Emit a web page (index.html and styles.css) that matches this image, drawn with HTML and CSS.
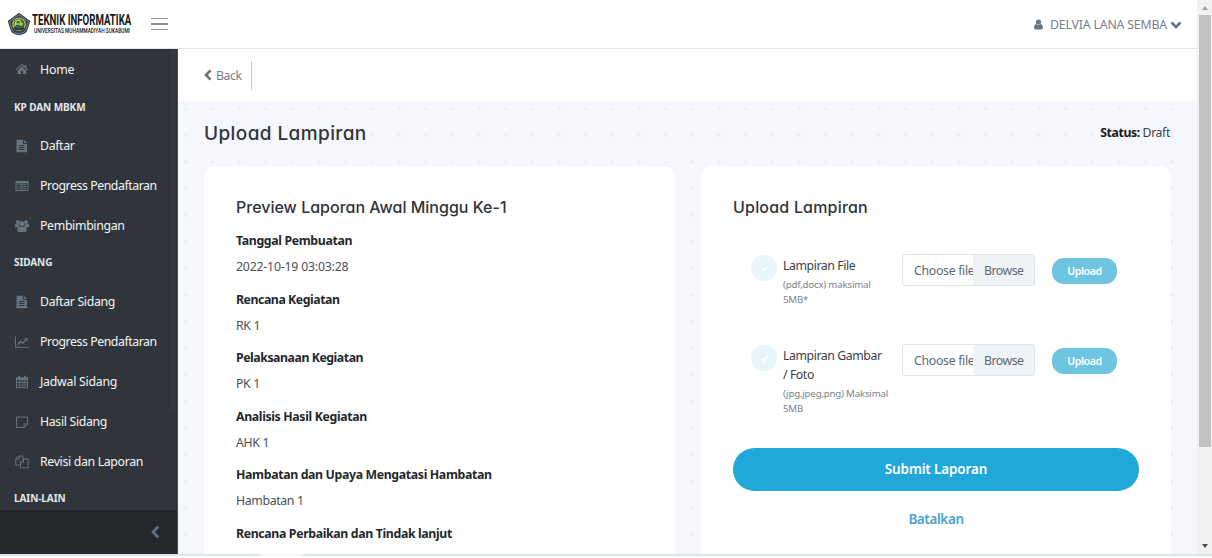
FILE: index.html
```html
<!DOCTYPE html>
<html lang="id">
<head>
<meta charset="utf-8">
<title>Upload Lampiran</title>
<link rel="stylesheet" href="styles.css">
</head>
<body>
<div class="screen">
  <div class="app">
    <header class="topbar">
      <div class="brand">
        <svg class="crest" viewBox="0 0 24 24"><path d="M12 .8 23.3 9 20.6 17.500Q19.500 22.300 12 23.300 4.500 22.300 3.400 17.500L.7 9z" fill="#34414f"/><path d="M12 2.500 21.500 9.500 19 17.600Q17.500 21 12 22 6.500 21 5 17.600L2.500 9.500z" fill="none" stroke="#8793a0" stroke-width=".8"/><circle cx="12" cy="12.200" r="6.800" fill="#c9b944"/><circle cx="12" cy="12.200" r="5.600" fill="#2e694f"/><path d="M8 14c0-4 2-6 4-6s2 4 2 6M8 12h8" fill="none" stroke="#c9cf50" stroke-width="1.500"/><path d="M7 16q5 3 10 0" fill="none" stroke="#203040" stroke-width="1.500"/></svg>
        <div class="wordmark"><span class="word-main">TEKNIK INFORMATIKA</span><span class="word-sub">UNIVERSITAS MUHAMMADIYAH SUKABUMI</span></div>
      </div>
      <div class="burger"><i></i><i></i><i></i></div>
      <div class="user">
        <svg class="person" viewBox="0 0 10 12"><circle cx="5" cy="3.300" r="2.900"/><path d="M2.200 5.500Q0 6.200 0 9.300 0 11.500 1.800 11.500H8.200Q10 11.500 10 9.300 10 6.200 7.800 5.500 5 8 2.200 5.500z"/></svg>
        <span class="user-name">DELVIA LANA SEMBA</span>
        <svg class="caret" viewBox="0 0 12 8"><path d="M1.500 1.500 6 6 10.500 1.500"/></svg>
      </div>
    </header>
    <div class="body">
      <aside class="sidebar">
        <nav class="menu">
          <a class="item"><svg class="ico" viewBox="0 0 14 14"><path d="M7 2 .8 7.300l.7.800L7 3.500l5.500 4.600.7-.8-2-1.700V2.800H9.700v1.500zM7 4.600 2.700 8.200V12H6V9h2v3h3.300V8.200z"/></svg><span class="w-home">Home</span></a>
          <div class="group"><span>KP DAN MBKM</span></div>
          <a class="item"><svg class="ico" viewBox="0 0 14 14"><path fill-rule="evenodd" d="M1.500.8H8V5h4v8.200H1.500zM9 .8 12 4H9zM4 6v1h5.500V6zm0 2v1h5.500V8zm0 2v1h5.500v-1z"/></svg><span>Daftar</span></a>
          <a class="item"><svg class="ico" viewBox="0 0 14 14"><path fill-rule="evenodd" d="M.5 2h13v10H.5zM1.500 4.500v6.500h11V4.500zM2.500 5.300h1v1h-1zm2 0h7v1h-7zm-2 2h1v1h-1zm2 0h7v1h-7zm-2 2h1v1h-1zm2 0h7v1h-7z"/></svg><span class="w-prog">Progress Pendaftaran</span></a>
          <a class="item"><svg class="ico" viewBox="0 0 14 14"><circle cx="2.900" cy="3" r="1.900"/><circle cx="11.100" cy="3" r="1.900"/><circle cx="7" cy="4.700" r="2.700"/><path d="M0 7.700V6.200Q0 4.800 1.300 4.600L3.700 5.400Q3.800 6.800 4.500 7.200L3 8.200H.8Q0 8.200 0 7.700zM14 7.700V6.200Q14 4.800 12.700 4.600L10.300 5.400Q10.200 6.800 9.500 7.200L11 8.200h2.200q.8 0 .8-.5zM4.300 7.200Q2.300 7.700 2.300 11.200q0 1.900 1.700 1.900h6q1.700 0 1.700-1.900 0-3.500-2-4-2.700 1.800-5.400 0z"/></svg><span>Pembimbingan</span></a>
          <div class="group g-up"><span>SIDANG</span></div>
          <a class="item"><svg class="ico" viewBox="0 0 14 14"><path fill-rule="evenodd" d="M1.500.8H8V5h4v8.200H1.500zM9 .8 12 4H9zM4 6v1h5.500V6zm0 2v1h5.500V8zm0 2v1h5.500v-1z"/></svg><span>Daftar Sidang</span></a>
          <a class="item"><svg class="ico line" viewBox="0 0 14 14"><path d="M.5 1.500v10.800H14"/><path d="M2.800 9.500 5.700 6.300l2 2L11.800 4" stroke-width="1.500"/><path d="M9.300 3h3.300v3.300z" class="solid"/></svg><span class="w-prog">Progress Pendaftaran</span></a>
          <a class="item"><svg class="ico" viewBox="0 0 14 14"><path fill-rule="evenodd" d="M1 2.300h2V.8h2v1.500h4V.8h2v1.500h2v11H1zM2 5.300v1.800h2V5.300zm2.800 0v1.800h2V5.300zm2.800 0v1.800h2V5.300zm2.800 0v1.800H12V5.300zM2 7.900v1.800h2V7.900zm2.800 0v1.800h2V7.900zm2.800 0v1.800h2V7.900zm2.800 0v1.800H12V7.900zM2 10.500v1.800h2v-1.800zm2.800 0v1.800h2v-1.800zm2.800 0v1.800h2v-1.800zm2.800 0v1.800H12v-1.800z"/></svg><span class="w-jad">Jadwal Sidang</span></a>
          <a class="item"><svg class="ico line" viewBox="0 0 14 14"><path d="M1.500 2h11v7.500L9.500 12.500h-8zM12.500 9H9v3.500"/></svg><span>Hasil Sidang</span></a>
          <a class="item"><svg class="ico line" viewBox="0 0 14 14"><path d="M5 10H.8V4L4 1h4v3M4 1v3H.8M5.500 7l3-3h4.700v8.800H5.500zM8.500 4v3.200h-3"/></svg><span>Revisi dan Laporan</span></a>
          <div class="group g-up"><span>LAIN-LAIN</span></div>
        </nav>
        <div class="thumb"></div>
        <div class="minimizer"><svg viewBox="0 0 9 14"><path d="M7.300 1.500 2 7l5.300 5.500"/></svg></div>
      </aside>
      <main class="main">
        <div class="crumb"><a class="back"><svg viewBox="0 0 8 12"><path d="M6.500 1.300 2 6l4.500 4.700"/></svg><span>Back</span></a></div>
        <div class="content">
          <div class="page-head"><h1>Upload Lampiran</h1><p class="status"><b>Status:</b> Draft</p></div>
          <div class="cards">
            <section class="card preview">
              <h2 class="h-prev">Preview Laporan Awal Minggu Ke-1</h2>
              <dl>
                <dt>Tanggal Pembuatan</dt><dd class="date">2022-10-19 03:03:28</dd>
                <dt class="tight">Rencana Kegiatan</dt><dd>RK 1</dd>
                <dt class="tight">Pelaksanaan Kegiatan</dt><dd>PK 1</dd>
                <dt>Analisis Hasil Kegiatan</dt><dd>AHK 1</dd>
                <dt>Hambatan dan Upaya Mengatasi Hambatan</dt><dd>Hambatan 1</dd>
                <dt>Rencana Perbaikan dan Tindak lanjut</dt>
              </dl>
            </section>
            <section class="card upload">
              <h2 class="h-up">Upload Lampiran</h2>
              <div class="row">
                <div class="check"><svg viewBox="0 0 10 8"><path d="M1.500 4 4 6.300 8.500 1.700"/></svg></div>
                <div class="label"><p>Lampiran File</p><small>(pdf,docx) maksimal<br>5MB*</small></div>
                <div class="file"><span class="choose">Choose file</span><span class="browse">Browse</span></div>
                <button class="up">Upload</button>
              </div>
              <div class="row">
                <div class="check"><svg viewBox="0 0 10 8"><path d="M1.500 4 4 6.300 8.500 1.700"/></svg></div>
                <div class="label"><p>Lampiran Gambar<br>/ Foto</p><small>(jpg,jpeg,png) Maksimal<br>5MB</small></div>
                <div class="file"><span class="choose">Choose file</span><span class="browse">Browse</span></div>
                <button class="up">Upload</button>
              </div>
              <button class="submit">Submit Laporan</button>
              <a class="cancel">Batalkan</a>
            </section>
          </div>
        </div>
      </main>
    </div>
  </div>
  <div class="scrollbar"><i class="arrow-up"></i><i class="track-thumb"></i><i class="arrow-down"></i></div>
</div>
<div class="edge"><i></i></div>
</body>
</html>
```
FILE: styles.css
```css
* { box-sizing: border-box; }
body { margin: 0; width: 1212px; height: 558px; overflow: hidden; background: #fff; color: #3c4146; font: 12.3px/20px "Noto Sans", sans-serif; }
h1, h2, p, dl, dd { margin: 0; }
svg { display: block; flex: none; }
.screen { display: flex; height: 554px; overflow: hidden; }
.app { width: 1197px; display: flex; flex-direction: column; }

.topbar { height: 49px; flex: none; display: flex; align-items: center; border-bottom: 1px solid #e3e6e9; padding: 0 15px 0 7px; }
.brand { display: flex; align-items: center; width: 126px; gap: 1px; }
.crest { width: 24px; height: 24px; }
.wordmark { display: flex; flex-direction: column; white-space: nowrap; width: 100px; color: #171717; font-family: Roboto, sans-serif; }
.word-main { font-size: 15.500px; font-weight: 700; line-height: 14px; transform: scaleX(.622); transform-origin: 0 0; }
.word-sub { font-size: 7px; font-weight: 500; line-height: 8px; transform: scaleX(.69); transform-origin: 0 0; margin-left: 2px; }
.burger { width: 17px; margin-left: 18px; display: flex; flex-direction: column; gap: 4px; }
.burger i { height: 1.500px; background: #8b959e; }
.user { margin-left: auto; display: flex; align-items: center; color: #73818f; padding-top: 1px; }
.person { width: 9px; height: 11px; fill: #687582; margin-right: 7px; }
.user-name { letter-spacing: -.17px; white-space: nowrap; width: 117px; }
.caret { width: 12px; height: 8px; margin-left: 3px; }
.caret path, .back path, .minimizer path { fill: none; stroke: #65727f; stroke-width: 2.600; }

.body { display: flex; height: 505px; }
.sidebar { position: relative; width: 178px; flex: none; background: #2f353a; display: flex; flex-direction: column; border-right: 1px solid #464b50; }
.menu { height: 461px; overflow: hidden; }
.item { display: flex; align-items: center; height: 40px; padding-left: 15px; gap: 11px; color: #f5f6f7; white-space: nowrap; letter-spacing: -.33px; }
.w-home { padding-top: 1px; letter-spacing: -.2px; }
.w-prog { letter-spacing: -.43px; }
.w-jad { letter-spacing: -.25px; }
.ico { width: 14px; height: 14px; fill: #65727f; }
.line { fill: none; stroke: #65727f; stroke-width: 1; }
.solid { fill: #65727f; stroke: none; }
.group { display: flex; align-items: center; height: 36.500px; padding: 0 0 1px 14px; color: #e4e7ea; font-size: 10px; font-weight: 700; letter-spacing: -.08px; }
.g-up { padding-bottom: 4px; }
.thumb { position: absolute; right: 1px; top: 0; width: 6px; height: 362px; background: #33393d; }
.minimizer { height: 44px; background: #25282c; display: flex; align-items: center; justify-content: flex-end; padding-right: 17px; }
.minimizer svg { width: 9px; height: 14px; }

.main { flex: 1; display: flex; flex-direction: column; }
.crumb { height: 52px; flex: none; display: flex; align-items: center; padding-left: 26px; }
.back { display: flex; align-items: center; height: 29px; width: 48px; gap: 4px; border-right: 1px solid #c8ced3; color: #73818f; letter-spacing: -.4px; }
.back span { padding-top: 2px; }
.back svg { width: 8px; height: 12px; }
.content { height: 453px; padding: 0 27px 0 26px; background: radial-gradient(ellipse 1.500px 1px at 8px 8px, #e8eaf1 99%, transparent) 0 0 / 26.670px 26.600px #f6f7fc; }
.page-head { height: 65px; display: flex; justify-content: space-between; align-items: center; }
.status { color: #3c4146; letter-spacing: -.4px; margin-top: -2px; }
.status b { color: #17191d; }
h1, h2 { font-family: Inter, sans-serif; font-weight: 500; font-feature-settings: "cv11"; color: #30343a; white-space: nowrap; }
h1 { font-size: 19px; letter-spacing: .4px; }
h2 { font-size: 16px; line-height: 24px; }
.h-up { letter-spacing: .2px; }
.cards { display: flex; gap: 27px; height: 388px; margin-right: -1px; }
.card { width: 470px; flex: none; background: #fff; border-radius: 11px 11px 0 0; padding: 29px 32px 0; }
dl { margin-top: 12px; }
dt { font-weight: 700; color: #24282d; line-height: 20px; white-space: nowrap; letter-spacing: -.35px; }
.tight { letter-spacing: -.45px; }
dd { line-height: 20px; margin: 6px 0 12.600px; letter-spacing: -.35px; color: #4b5056; }
.date { letter-spacing: -.2px; }

.row { display: flex; align-items: flex-start; height: 90px; padding-left: 18px; }
.h-up + .row { margin-top: 35px; }
.check { width: 26px; height: 26px; border-radius: 50%; background: #e7f6fa; display: flex; align-items: center; justify-content: center; margin-top: 1px; }
.check svg { width: 9px; height: 7px; }
.check path { fill: none; stroke: #fff; stroke-width: 2; }
.label { width: 125px; padding: 2px 0 0 6px; white-space: nowrap; }
.label p { line-height: 19px; letter-spacing: -.43px; }
.label small { display: block; font-size: 9.700px; line-height: 15px; color: #7b828a; margin-top: 2px; letter-spacing: -.2px; }
.file { width: 133px; height: 32px; display: flex; border: 1px solid #e1e5e9; border-radius: 3px; overflow: hidden; color: #5c6873; white-space: nowrap; line-height: 31px; }
.choose { width: 70px; padding-left: 11px; overflow: hidden; letter-spacing: -.3px; }
.browse { flex: 1; background: #f0f3f5; padding-left: 11px; letter-spacing: -.5px; }
.up { width: 65px; height: 26px; margin: 4px 0 0 17px; padding: 0; border: 0; border-radius: 12px; background: #6ec5e2; color: #fff; font: 600 10.600px/26px "Noto Sans", sans-serif; letter-spacing: -.4px; }
.submit { display: block; width: 406px; height: 43px; margin-top: 14px; padding: 0; border: 0; border-radius: 22px; background: #20a8d8; color: #fff; font: 600 13.500px/43px "Noto Sans", sans-serif; letter-spacing: -.15px; }
.cancel { display: block; text-align: center; margin-top: 18px; color: #4ba3cb; font-size: 13.500px; font-weight: 600; letter-spacing: -.4px; }

.scrollbar { width: 15px; background: #f1f1f1; display: flex; flex-direction: column; align-items: center; }
.arrow-up { margin-top: 6px; border: 3px solid transparent; border-top: 0; border-bottom: 4px solid #a3a3a3; }
.track-thumb { margin-top: 5px; width: 12px; height: 432px; background: #c1c1c1; }
.arrow-down { margin-top: auto; margin-bottom: 6px; border: 3px solid transparent; border-bottom: 0; border-top: 4px solid #505050; }
.edge { height: 2px; background: #dce5e6; padding-left: 260px; }
.edge i { display: block; width: 43px; height: 2px; background: #f7f9f9; }
```
